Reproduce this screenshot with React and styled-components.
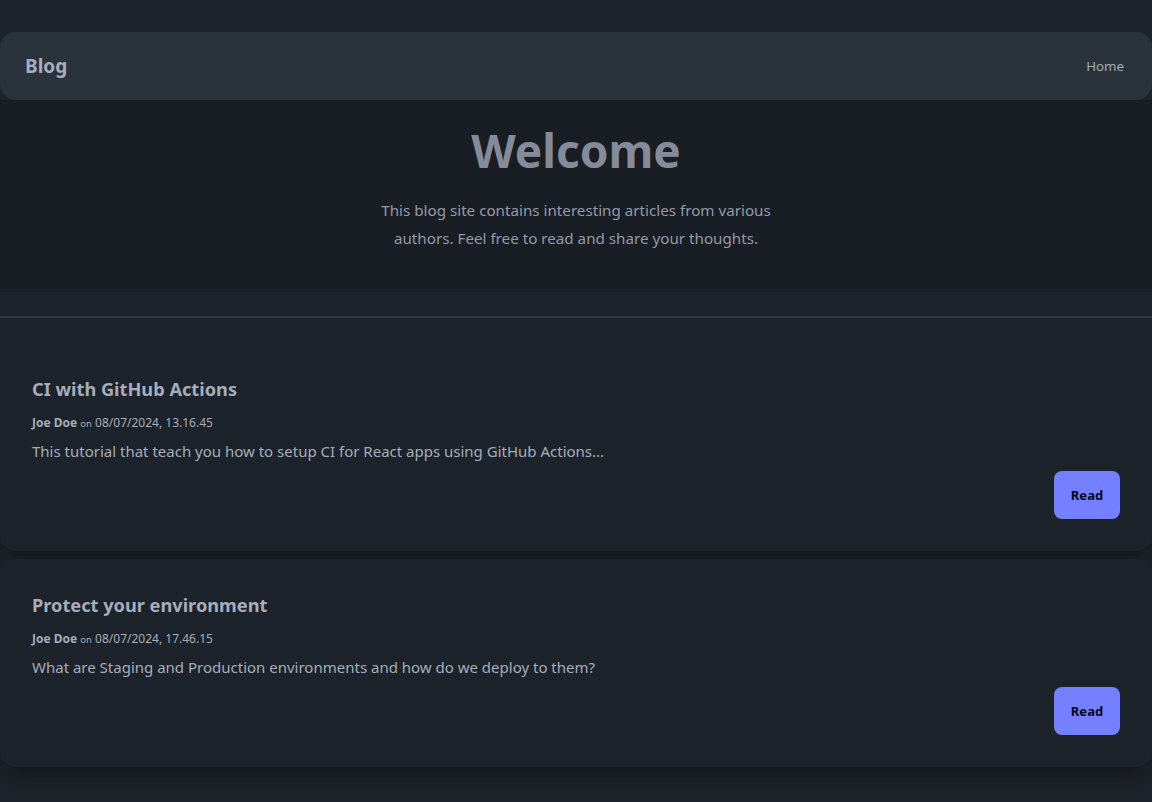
import React from "react";
import styled, { createGlobalStyle } from "styled-components";

const Global = createGlobalStyle`
  html, body { margin: 0; padding: 0; background: #1d232a; }
  body { font-family: "Noto Sans", "Open Sans", sans-serif; color: #a6adbb; }
  * { box-sizing: border-box; }
`;

const Page = styled.div`
  padding-top: 32px;
  min-height: 802px;
  background: #1d232a;
`;

const Navbar = styled.nav`
  height: 68px;
  background: #2a323c;
  border-radius: 16px;
  display: flex;
  align-items: center;
  justify-content: space-between;
  padding: 0 28px 0 25px;
`;

const Brand = styled.a`
  font-size: 19px;
  font-weight: 700;
  color: #a6adbb;
  text-decoration: none;
`;

const NavLink = styled.a`
  font-size: 13.3px;
  color: #a6adbb;
  text-decoration: none;
`;

const Hero = styled.section`
  background: #191e24;
  padding: 22px 16px 40px;
  display: flex;
  flex-direction: column;
  align-items: center;
  text-align: center;
`;

const Title = styled.h1`
  margin: 0;
  font-size: 46px;
  line-height: 56px;
  font-weight: 700;
  color: #868b99;
`;

const Lead = styled.p`
  margin: 18px 0 0;
  max-width: 400px;
  font-size: 15.2px;
  line-height: 28px;
  color: #949aa8;
`;

const Divider = styled.hr`
  margin: 24px 0 0;
  border: 0;
  height: 2px;
  background: #2e353f;
`;

const List = styled.div`
  display: flex;
  flex-direction: column;
  gap: 8px;
  margin-top: 25px;
`;

const Card = styled.article`
  background: #1d232a;
  border-radius: 16px;
  box-shadow: 0 20px 25px -5px rgba(0, 0, 0, 0.18), 0 8px 10px -6px rgba(0, 0, 0, 0.18);
  padding: 32px;
  height: 208px;
  display: flex;
  flex-direction: column;
  gap: 8px;
`;

const CardTitle = styled.h2`
  margin: 0;
  height: 28px;
  font-size: 18.2px;
  line-height: 28px;
  font-weight: 700;
  color: #a6adbb;
`;

const Meta = styled.div`
  height: 20px;
  margin: 2px 0 -2px;
  font-size: 12px;
  line-height: 20px;
  color: #a6adbb;
`;

const Author = styled.b`
  font-weight: 700;
`;

const On = styled.span`
  font-size: 9.5px;
  line-height: 1;
`;

const Excerpt = styled.p`
  margin: 0;
  height: 24px;
  font-size: 15px;
  line-height: 24px;
  color: #a6adbb;
`;

const Actions = styled.div`
  display: flex;
  justify-content: flex-end;
`;

const ReadButton = styled.button`
  height: 48px;
  width: 66px;
  padding: 0;
  border: 0;
  border-radius: 8px;
  background: #7480ff;
  color: #050617;
  font-family: inherit;
  font-size: 13px;
  font-weight: 700;
  cursor: pointer;
`;

const posts = [
  {
    title: "CI with GitHub Actions",
    author: "Joe Doe",
    date: "08/07/2024, 13.16.45",
    excerpt: "This tutorial that teach you how to setup CI for React apps using GitHub Actions...",
  },
  {
    title: "Protect your environment",
    author: "Joe Doe",
    date: "08/07/2024, 17.46.15",
    excerpt: "What are Staging and Production environments and how do we deploy to them?",
  },
];

export default function App() {
  return (
    <>
      <Global />
      <Page>
        <Navbar>
          <Brand href="#">Blog</Brand>
          <NavLink href="#">Home</NavLink>
        </Navbar>
        <Hero>
          <Title>Welcome</Title>
          <Lead>
            This blog site contains interesting articles from various authors. Feel free to read and share your thoughts.
          </Lead>
        </Hero>
        <Divider />
        <List>
          {posts.map((p) => (
            <Card key={p.title}>
              <CardTitle>{p.title}</CardTitle>
              <Meta>
                <Author>{p.author}</Author> <On>on</On> {p.date}
              </Meta>
              <Excerpt>{p.excerpt}</Excerpt>
              <Actions>
                <ReadButton>Read</ReadButton>
              </Actions>
            </Card>
          ))}
        </List>
      </Page>
    </>
  );
}
